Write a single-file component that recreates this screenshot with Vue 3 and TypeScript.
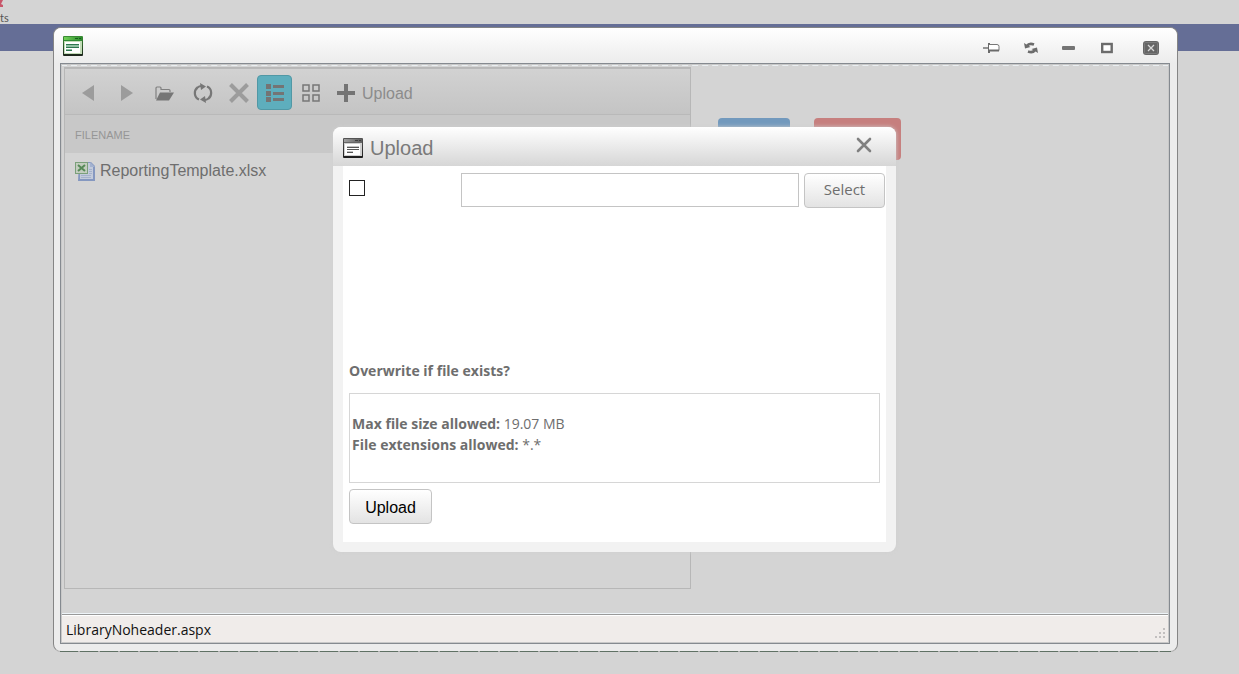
<script setup lang="ts">
import { ref } from 'vue'

interface LibraryFile {
  name: string
}

const files: LibraryFile[] = [{ name: 'ReportingTemplate.xlsx' }]
const view = ref<'list' | 'grid'>('list')
const overwrite = ref(false)
const path = ref('')
</script>

<template>
  <div class="page">
    <header class="site-head">
      <svg class="logo" width="6" height="9" viewBox="0 0 6 9" aria-hidden="true">
        <path d="M0 0h3L1 4l2 1v2H0z" fill="#c8566a" />
      </svg>
      <span class="site-name">ts</span>
    </header>
    <div class="band"></div>

    <section class="window" aria-label="Library window">
      <div class="titlebar">
        <svg width="20" height="20" viewBox="0 0 20 20" aria-hidden="true">
          <defs>
            <linearGradient id="green" x1="0" y1="0" x2="1" y2="0">
              <stop offset="0" stop-color="#72d258" />
              <stop offset="1" stop-color="#2a8a2c" />
            </linearGradient>
            <linearGradient id="green-edge" x1="0" y1="0" x2="0" y2="1">
              <stop offset="0" stop-color="#3c8f36" />
              <stop offset="1" stop-color="#1c241c" />
            </linearGradient>
          </defs>
          <rect width="20" height="20" rx="1" fill="url(#green-edge)" />
          <rect x="1" y="1" width="18" height="3" fill="url(#green)" />
          <rect x="1" y="4" width="18" height="1" fill="#2f8a34" />
          <path d="M12 2.500h3M16 2.500h2" stroke="#175e1b" />
          <rect x="1" y="5" width="18" height="13" fill="#c3dcb8" />
          <rect x="2" y="6" width="15" height="11" fill="#fff" />
          <path d="M3 8.500h13M3 11.500h13M3 14.500h6" stroke="#2f7650" />
          <path d="M3 9.500h13M3 10.500h13M3 13.500h6" stroke="#8fc0a2" />
        </svg>
        <div class="win-actions">
          <button type="button" class="win-btn" aria-label="Pin">
            <svg width="17" height="12" viewBox="0 0 17 12">
              <path d="M0 6h6" stroke="#6b6b6b" stroke-width="1.400" />
              <path d="M6 1v10" stroke="#6a6a6a" stroke-width="2" />
              <path d="M6 2.500h8q2 0 2 2v4H6" fill="#fff" stroke="#777" />
              <path d="M6 8.500h10" stroke="#6a6a6a" stroke-width="2" />
            </svg>
          </button>
          <button type="button" class="win-btn" aria-label="Reload">
            <svg width="14" height="12" viewBox="0 0 14 12">
              <path d="M3 4Q5 .8 10 2.500" fill="none" stroke="#6c6c6c" stroke-width="2.800" />
              <path d="M0 1l1 5.500 5.500-1.500z" fill="#6c6c6c" />
              <path d="M11 8Q9 11.200 4 9.500" fill="none" stroke="#6c6c6c" stroke-width="2.800" />
              <path d="M14 11l-1-5.500L7.500 7z" fill="#6c6c6c" />
            </svg>
          </button>
          <button type="button" class="win-btn" aria-label="Minimize">
            <svg width="13" height="12" viewBox="0 0 13 12">
              <rect y="4" width="13" height="4" rx="1" fill="#747474" />
            </svg>
          </button>
          <button type="button" class="win-btn" aria-label="Maximize">
            <svg width="12" height="12" viewBox="0 0 12 12">
              <rect x="1.200" y="2" width="9.500" height="8" fill="#fff" stroke="#6c6c6c" stroke-width="2.400" />
            </svg>
          </button>
          <button type="button" class="win-btn close-btn" aria-label="Close window">
            <svg width="16" height="14" viewBox="0 0 16 14">
              <rect width="16" height="14" rx="3" fill="#666" />
              <rect x="1.500" y="1.500" width="13" height="11" rx="1" fill="none" stroke="#7c7c7c" />
              <path d="M5 4l6 6M11 4l-6 6" stroke="#d8d8d8" stroke-width="1.300" />
            </svg>
          </button>
        </div>
      </div>

      <div class="frame">
        <div class="stage">
          <div class="explorer">
            <div class="toolbar">
              <button type="button" class="tool" aria-label="Back">
                <svg width="20" height="20" viewBox="0 0 20 20"><path d="M3 10L15 2v16z" fill="#9c9c9c" /></svg>
              </button>
              <button type="button" class="tool" aria-label="Forward">
                <svg width="20" height="20" viewBox="0 0 20 20"><path d="M16 10L4 2v16z" fill="#9c9c9c" /></svg>
              </button>
              <button type="button" class="tool" aria-label="Open">
                <svg width="20" height="20" viewBox="0 0 20 20">
                  <path d="M1 16V5q0-1 1-1h3q1 0 1 1v1.500h8q1 0 1 1V9" fill="none" stroke="#808080" stroke-width="1.200" />
                  <path d="M5 9.500h14l-5 8H1z" fill="#767676" />
                </svg>
              </button>
              <button type="button" class="tool" aria-label="Refresh">
                <svg width="20" height="20" viewBox="0 0 20 20">
                  <path d="M6 16.500C1 14.500 .5 7.500 4.500 4.500Q6.500 2.800 9 3" fill="none" stroke="#777" stroke-width="2.200" />
                  <path d="M14 3.500C19 5.500 19.500 12.500 15.500 15.500Q13.500 17.200 11 17" fill="none" stroke="#777" stroke-width="2.200" />
                  <path d="M7 0l6 3.500L8 7zM13 20l-6-3.500L12 13z" fill="#777" />
                </svg>
              </button>
              <button type="button" class="tool compact" aria-label="Delete">
                <svg width="20" height="20" viewBox="0 0 20 20">
                  <path d="M1.500 1.500l17 17M18.500 1.500l-17 17" stroke="#9c9c9c" stroke-width="4" />
                </svg>
              </button>
              <button
                type="button"
                class="tool compact"
                :class="{ active: view === 'list' }"
                aria-label="List view"
                @click="view = 'list'"
              >
                <svg width="20" height="20" viewBox="0 0 20 20">
                  <path d="M1 1h5v5H1zM1 8h5v5H1zM1 14h5v5H1z" fill="#747474" />
                  <path d="M8 3.500h11M8 10.500h11M8 16.500h11" stroke="#747474" stroke-width="3" />
                </svg>
              </button>
              <button
                type="button"
                class="tool compact"
                :class="{ active: view === 'grid' }"
                aria-label="Grid view"
                @click="view = 'grid'"
              >
                <svg width="20" height="20" viewBox="0 0 20 20">
                  <path d="M2 2h6v6H2zM12 2h6v6h-6zM2 12h6v6H2zM12 12h6v6h-6z" fill="none" stroke="#777" stroke-width="1.500" />
                </svg>
              </button>
              <button type="button" class="tool compact upload-tool">
                <svg width="20" height="20" viewBox="0 0 20 20" aria-hidden="true">
                  <path d="M10 1v18M1 10h18" stroke="#747474" stroke-width="4" />
                </svg>
                <span>Upload</span>
              </button>
            </div>
            <table class="files">
              <thead>
                <tr><th scope="col">FILENAME</th></tr>
              </thead>
              <tbody>
                <tr v-for="file in files" :key="file.name">
                  <td>
                    <div class="file">
                      <svg width="20" height="20" viewBox="0 0 20 20" aria-hidden="true">
                        <path d="M4 1h12l4 4v15H3z" fill="#8598c0" />
                        <path d="M5 2h10v4h3v12H5z" fill="#c3cbdb" />
                        <path d="M15 1v5h5z" fill="#a3b2d0" />
                        <path d="M6 14.500h10M6 16.500h10M14 8.500h3M14 10.500h3M14 12.500h3" stroke="#a5b2cc" />
                        <rect x="0.500" y="1.500" width="12" height="11" fill="#c3cdbf" stroke="#7ba07a" />
                        <path d="M3 4l7 6M10 4l-7 6" stroke="#568a57" stroke-width="2" />
                      </svg>
                      <span>{{ file.name }}</span>
                    </div>
                  </td>
                </tr>
              </tbody>
            </table>
          </div>
          <div class="tiles">
            <div class="tile blue"></div>
            <div class="tile red"></div>
          </div>
        </div>
        <footer class="status">
          <span>LibraryNoheader.aspx</span>
          <svg width="10" height="10" viewBox="0 0 10 10" aria-hidden="true">
            <path d="M8 0h2v2H8zM4 4h2v2H4zM8 4h2v2H8zM0 8h2v2H0zM4 8h2v2H4zM8 8h2v2H8z" fill="#c2bfbf" />
          </svg>
        </footer>
      </div>
    </section>

    <section class="dialog" role="dialog" aria-labelledby="dialog-title">
      <header class="dialog-head">
        <svg width="20" height="20" viewBox="0 0 20 20" aria-hidden="true">
          <defs>
            <linearGradient id="gray" x1="0" y1="0" x2="1" y2="0">
              <stop offset="0" stop-color="#a0a0a0" />
              <stop offset="1" stop-color="#5c5c5c" />
            </linearGradient>
            <linearGradient id="gray-edge" x1="0" y1="0" x2="0" y2="1">
              <stop offset="0" stop-color="#555" />
              <stop offset="1" stop-color="#1c1c1c" />
            </linearGradient>
          </defs>
          <rect width="20" height="20" rx="1" fill="url(#gray-edge)" />
          <rect x="1" y="1" width="18" height="3" fill="url(#gray)" />
          <rect x="1" y="4" width="18" height="1" fill="#666" />
          <path d="M12 2.500h3M16 2.500h2" stroke="#3c3c3c" />
          <rect x="1" y="5" width="18" height="13" fill="#d0d0d0" />
          <rect x="2" y="6" width="15" height="11" fill="#fff" />
          <path d="M4 9.500h12M4 11.500h12M4 14.500h6" stroke="#555" />
          <path d="M4 8.500h12M4 13.500h6" stroke="#c4c4c4" />
        </svg>
        <h1 id="dialog-title">Upload</h1>
        <button type="button" class="dialog-close" aria-label="Close">
          <svg width="16" height="16" viewBox="0 0 16 16">
            <path d="M2 2l12 12M14 2L2 14" stroke="#808080" stroke-width="2.600" stroke-linecap="round" />
          </svg>
        </button>
      </header>
      <form class="dialog-body" @submit.prevent>
        <div class="picker">
          <input id="overwrite" v-model="overwrite" class="check" type="checkbox" />
          <input v-model="path" class="path" type="text" aria-label="File to upload" />
          <button type="button" class="btn select">Select</button>
        </div>
        <label class="overwrite" for="overwrite">Overwrite if file exists?</label>
        <div class="limits">
          <p><b>Max file size allowed:</b> 19.07 MB</p>
          <p><b>File extensions allowed:</b> *.*</p>
        </div>
        <button type="submit" class="btn submit">Upload</button>
      </form>
    </section>
  </div>
</template>

<style>
body {
  background: #d4d4d4;
}
</style>

<style scoped>
* {
  box-sizing: border-box;
}
.page {
  position: relative;
  min-height: 100vh;
  overflow: hidden;
  background: #d4d4d4;
  font-family: 'Liberation Sans', Arial, sans-serif;
  color: #6e6e6e;
}
button {
  padding: 0;
  border: 0;
  background: none;
  color: inherit;
  font: inherit;
}
svg {
  display: block;
  flex: none;
}
.site-head {
  display: flex;
  flex-direction: column;
  justify-content: space-between;
  height: 24px;
}
.site-name {
  font: 11px/12px Lato, sans-serif;
  color: #555;
}
.band {
  height: 27px;
  background: #656e96;
}

.window {
  position: absolute;
  inset: 27px 61px 22px 53px;
  display: flex;
  flex-direction: column;
  padding: 0 7px 7px 6px;
  border: 1px solid #858585;
  border-bottom-color: #b0b0b0;
  border-radius: 8px;
  background: #ececec;
}
/* Broken shadow line along the lower edge */
.window::after {
  content: '';
  position: absolute;
  right: 6px;
  bottom: -1px;
  left: 6px;
  height: 1px;
  background: repeating-linear-gradient(90deg, #5f7164 0 18px, #b0b0b0 18px 20px);
}
.titlebar {
  display: flex;
  align-items: center;
  justify-content: space-between;
  height: 35px;
  margin: 0 -7px 0 -6px;
  padding: 1px 18px 0 9px;
  border-radius: 7px 7px 0 0;
  background: linear-gradient(#fff, #ececec);
}
.win-actions {
  display: flex;
  align-items: center;
  gap: 24px;
  padding-top: 4px;
}
.win-btn:nth-child(3) {
  margin-right: 2px;
}
.close-btn {
  margin-left: 6px;
}

.frame {
  flex: 1;
  display: flex;
  flex-direction: column;
  border: 1px solid #858a90;
  outline: 1px solid #c8c8c8;
  outline-offset: -2px;
}
.stage {
  flex: 1;
  display: flex;
  align-items: stretch;
  padding: 1px 0 24px 2px;
  border: 1px solid #eef4f8;
  border-top: 2px dashed #e9eef1;
  background: #d4d4d4;
}
.explorer {
  width: 627px;
  max-width: 60%;
  border: 1px solid #b7b7b7;
}
.toolbar {
  display: flex;
  align-items: center;
  gap: 3px;
  height: 47px;
  padding: 2px 6px 0;
  border: 1px solid #b9b9b9;
  border-width: 1px 0;
  background: linear-gradient(#d2d2d2, #c4c4c4);
}
.tool {
  display: flex;
  align-items: center;
  justify-content: center;
  width: 35px;
  height: 35px;
  border: 1px solid transparent;
  border-radius: 4px;
}
.tool.compact {
  margin-left: -2px;
}
.tool.active {
  border-color: #5198a5;
  background: #5eaebd;
}
.upload-tool {
  width: auto;
  gap: 6px;
  padding: 1px 6px 0;
  font-size: 16px;
  color: #8c8c8c;
}
.upload-tool span {
  padding-top: 2px;
}
.files {
  width: 100%;
  border-collapse: collapse;
}
.files th {
  height: 38px;
  padding: 2px 10px 0;
  background: #c8c8c8;
  font-size: 11px;
  font-weight: 400;
  text-align: left;
  color: #969696;
}
.files td {
  height: 36px;
  padding: 0 10px;
}
.file {
  display: flex;
  align-items: center;
  gap: 5px;
  font-size: 16px;
  line-height: 20px;
}
.tiles {
  display: flex;
  gap: 24px;
  padding: 51px 0 0 27px;
}
.tile {
  width: 72px;
  height: 42px;
  border-radius: 4px;
}
.blue {
  background: #7299bd;
}
.red {
  width: 87px;
  background: #c67f7e;
}
.status {
  display: flex;
  align-items: center;
  justify-content: space-between;
  height: 29px;
  padding: 2px 4px 0 5px;
  border-top: 1px solid #999;
  background: #f0ecea;
  box-shadow: inset 0 1px #fff;
  font: 14px/20px 'Open Sans', 'Noto Sans', sans-serif;
  color: #111;
}
.status svg {
  margin-top: 6px;
}

.dialog {
  position: absolute;
  top: 127px;
  left: 333px;
  width: 563px;
  padding-bottom: 10px;
  border-radius: 8px;
  background: #f2f2f2;
  box-shadow: 0 0 4px #cfcfcf;
}
.dialog-head {
  display: flex;
  align-items: center;
  gap: 7px;
  height: 39px;
  padding: 2px 24px 0 10px;
  border-radius: 8px 8px 0 0;
  background: linear-gradient(#fff, #d6d6d6);
}
.dialog-head h1 {
  flex: 1;
  margin: 0;
  font-size: 20px;
  line-height: 24px;
  font-weight: 400;
  color: #7a7a7a;
}
.dialog-close {
  padding-bottom: 6px;
}
.dialog-body {
  margin: 0 10px;
  padding: 7px 6px 18px;
  background: #fff;
  font: 14px/21px 'Open Sans', 'Noto Sans', sans-serif;
}
.picker {
  display: flex;
  align-items: flex-start;
  height: 187px;
  margin-right: -5px;
}
.check {
  appearance: none;
  width: 16px;
  height: 16px;
  margin: 7px 96px 0 0;
  border: 1px solid #222;
  background: #fff;
}
.check:checked {
  background: #6e6e6e;
}
.path {
  flex: 1;
  min-width: 0;
  height: 34px;
  margin-right: 5px;
  padding: 0 8px;
  border: 1px solid #c4c4c4;
  font: inherit;
}
.btn {
  height: 35px;
  border: 1px solid #c4c4c4;
  border-radius: 4px;
  background: linear-gradient(#fff, #e3e3e3);
}
.select {
  width: 81px;
  padding-bottom: 2px;
  font-size: 15px;
}
.overwrite {
  display: block;
  font-weight: 700;
}
.limits {
  height: 90px;
  margin: 12px 0 6px;
  padding: 19px 2px;
  border: 1px solid #d6d6d6;
}
.limits p {
  margin: 0;
}
.submit {
  display: block;
  width: 83px;
  padding-top: 2px;
  font: 16px/20px 'Liberation Sans', Arial, sans-serif;
  color: #000;
}
</style>
